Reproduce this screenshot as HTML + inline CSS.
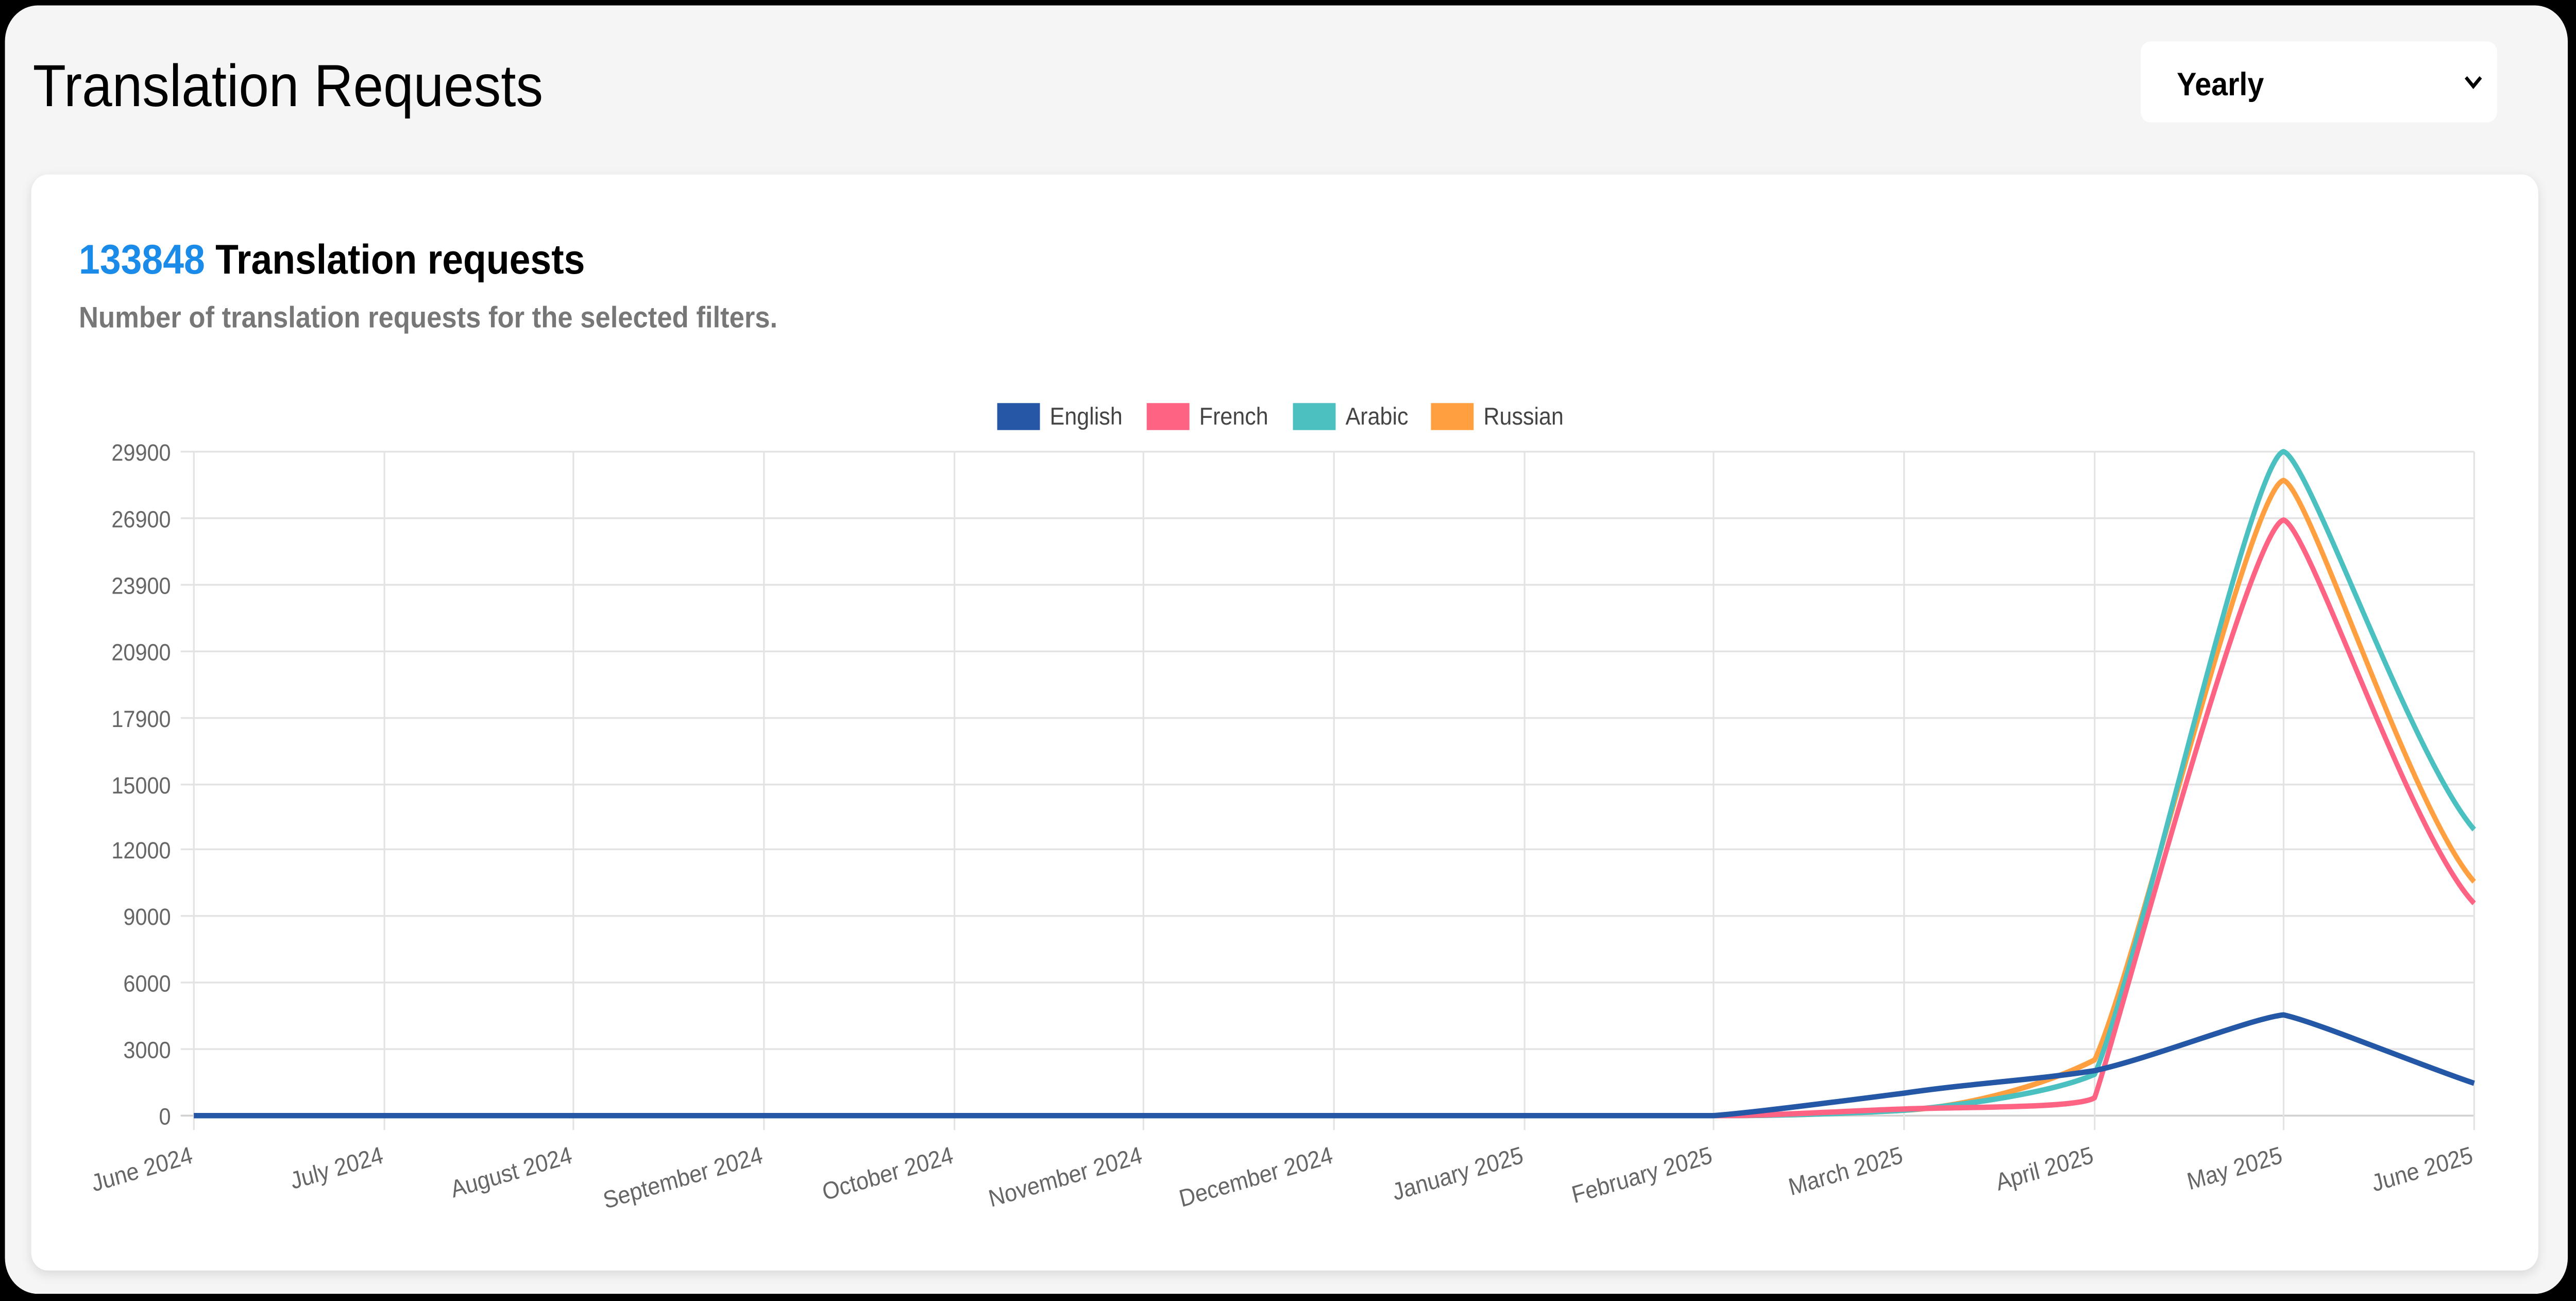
<!DOCTYPE html>
<html><head><meta charset="utf-8"><style>
html,body{margin:0;padding:0;background:#000;width:100%;height:100%;overflow:hidden;}
svg{display:block;width:100vw;height:100vh;}
text{font-family:"Liberation Sans",Arial,sans-serif}
</style></head><body>
<svg viewBox="0 0 1568 723" preserveAspectRatio="none" xmlns="http://www.w3.org/2000/svg">
<defs>
<filter id="sh" x="-5%" y="-5%" width="110%" height="115%"><feDropShadow dx="0" dy="2" stdDeviation="3" flood-color="#000" flood-opacity="0.12"/></filter>
</defs>
<rect x="0" y="0" width="1568" height="723" fill="#000"/>
<rect x="3" y="3" width="1560" height="716" rx="20" fill="#f5f5f5"/>
<text x="20" y="59" font-size="33" fill="#000">Translation Requests</text>
<rect x="1303" y="23" width="217" height="45" rx="6" fill="#fff"/>
<text x="1325" y="53" font-size="18" font-weight="bold" fill="#000">Yearly</text>
<path d="M1501 43 L1505.5 48 L1510 43" fill="none" stroke="#000" stroke-width="2"/>
<rect x="19" y="97" width="1526" height="609" rx="10" fill="#fff" filter="url(#sh)"/>
<text x="48" y="152" font-size="23" font-weight="bold"><tspan fill="#1a8be8">133848</tspan><tspan fill="#000"> Translation requests</tspan></text>
<text x="48" y="182" font-size="16.5" font-weight="bold" fill="#777">Number of translation requests for the selected filters.</text>
<g font-size="13.5" fill="#444">
<rect x="607" y="224" width="26" height="15" fill="#2457a5"/><text x="639" y="236">English</text>
<rect x="698" y="224" width="26" height="15" fill="#ff6384"/><text x="730" y="236">French</text>
<rect x="787" y="224" width="26" height="15" fill="#4bc0c0"/><text x="819" y="236">Arabic</text>
<rect x="871" y="224" width="26" height="15" fill="#ff9f40"/><text x="903" y="236">Russian</text>
</g>
<g stroke="#e3e3e3" stroke-width="1">
<line x1="110" y1="251" x2="1506" y2="251"/>
<line x1="110" y1="288" x2="1506" y2="288"/>
<line x1="110" y1="325" x2="1506" y2="325"/>
<line x1="110" y1="362" x2="1506" y2="362"/>
<line x1="110" y1="399" x2="1506" y2="399"/>
<line x1="110" y1="436" x2="1506" y2="436"/>
<line x1="110" y1="472" x2="1506" y2="472"/>
<line x1="110" y1="509" x2="1506" y2="509"/>
<line x1="110" y1="546" x2="1506" y2="546"/>
<line x1="110" y1="583" x2="1506" y2="583"/>
<line x1="110" y1="620" x2="1506" y2="620" stroke="#d0d0d0"/>
<line x1="118" y1="251" x2="118" y2="628"/>
<line x1="234" y1="251" x2="234" y2="628"/>
<line x1="349" y1="251" x2="349" y2="628"/>
<line x1="465" y1="251" x2="465" y2="628"/>
<line x1="581" y1="251" x2="581" y2="628"/>
<line x1="696" y1="251" x2="696" y2="628"/>
<line x1="812" y1="251" x2="812" y2="628"/>
<line x1="928" y1="251" x2="928" y2="628"/>
<line x1="1043" y1="251" x2="1043" y2="628"/>
<line x1="1159" y1="251" x2="1159" y2="628"/>
<line x1="1275" y1="251" x2="1275" y2="628"/>
<line x1="1390" y1="251" x2="1390" y2="628"/>
<line x1="1506" y1="251" x2="1506" y2="628"/>
</g>
<g font-size="13" fill="#666" text-anchor="end">
<text x="104" y="256">29900</text>
<text x="104" y="293">26900</text>
<text x="104" y="330">23900</text>
<text x="104" y="367">20900</text>
<text x="104" y="404">17900</text>
<text x="104" y="441">15000</text>
<text x="104" y="477">12000</text>
<text x="104" y="514">9000</text>
<text x="104" y="551">6000</text>
<text x="104" y="588">3000</text>
<text x="104" y="625">0</text>
</g>
<g font-size="13.5" fill="#666" text-anchor="end">
<text transform="translate(118,646) rotate(-15)">June 2024</text>
<text transform="translate(234,646) rotate(-15)">July 2024</text>
<text transform="translate(349,646) rotate(-15)">August 2024</text>
<text transform="translate(465,646) rotate(-15)">September 2024</text>
<text transform="translate(581,646) rotate(-15)">October 2024</text>
<text transform="translate(696,646) rotate(-15)">November 2024</text>
<text transform="translate(812,646) rotate(-15)">December 2024</text>
<text transform="translate(928,646) rotate(-15)">January 2025</text>
<text transform="translate(1043,646) rotate(-15)">February 2025</text>
<text transform="translate(1159,646) rotate(-15)">March 2025</text>
<text transform="translate(1275,646) rotate(-15)">April 2025</text>
<text transform="translate(1390,646) rotate(-15)">May 2025</text>
<text transform="translate(1506,646) rotate(-15)">June 2025</text>
</g>
<g fill="none" stroke-width="3" stroke-linejoin="round">
<path stroke="#ff9f40" d="M118 620 L1043 620 C1081.6 620 1120.4 619 1159 617 C1197.6 615 1245 603 1275 589 C1300 540 1370 270 1390 267 C1405 270 1467.4 450 1506 490"/>
<path stroke="#4bc0c0" d="M118 620 L1043 620 C1081.6 620 1120.4 619 1159 617 C1197.6 614 1250 607 1275 597 C1300 545 1370 254 1390 251 C1405 254 1467.4 420 1506 461"/>
<path stroke="#ff6384" d="M118 620 L1043 620 C1081.6 620 1120.4 617.5 1159 616.3 C1197.6 615 1265 616 1275 610 C1290 570 1370 292 1390 289 C1405 292 1467.4 465 1506 502"/>
<path stroke="#2457a5" d="M118 620 L1043 620 C1070 618 1120 612 1159 607.5 C1200 602 1240 600 1275 595 C1310 588 1370 566 1390 564 C1410 568 1467.4 590 1506 602"/>
</g>
</svg>
</body></html>
